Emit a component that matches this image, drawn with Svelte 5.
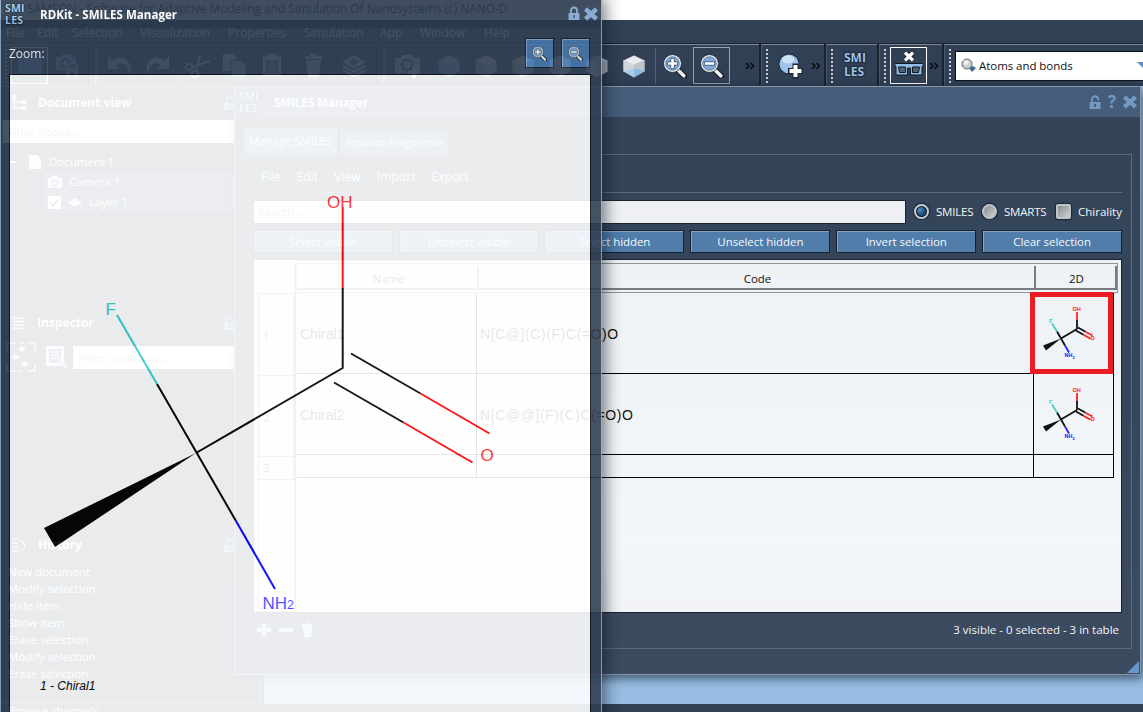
<script>
  const menus = [['File', 31], ['Edit', 35], ['Selection', 68], ['Visualization', 88], ['Properties', 76], ['Simulation', 76], ['App', 40], ['Window', 64], ['Help', 40]];
  const history = ['New document', 'Modify selection', 'Hide item', 'Show item', 'Erase selection', 'Modify selection', 'Erase selection'];
  const tools = [
    { w: 88, items: ['stop', 'shot'] },
    { w: 286, items: ['undo', 'redo', '|', 'cut', 'copy', 'paste', '|', 'trash', '|', 'layers'] },
    { w: 381, items: ['camera', '|', 'cube0', 'cube1', 'cube2', 'cube3', 'cube4', 'cube5', '|', 'zoomin', 'zoomout'], more: true },
    { w: 63, items: ['sphere'], more: true },
    { w: 51, items: ['smiles'] },
    { w: 63, items: ['glasses'], more: true }
  ];
  const cubes = {
    cube0: ['#b3cfe9', '#7ba6d0', '#92b9df'],
    cube1: ['#e6e8ea', '#9cbde0', '#c4c8cc'],
    cube2: ['#e6e8ea', '#c4c8cc', '#92b9df'],
    cube3: ['#c9ddef', '#b8bcc1', '#d5d7da'],
    cube4: ['#9dc1e3', '#d8dadd', '#a8adb3'],
    cube5: ['#e9eaec', '#a8cdec', '#8eb9df']
  };
  const boxed = ['stop', 'zoomout', 'glasses'];
  const actions = ['Select visible', 'Unselect visible', 'Select hidden', 'Unselect hidden', 'Invert selection', 'Clear selection'];
  const rows = [['1', 'Chiral1', 'N[C@](C)(F)C(=O)O'], ['2', 'Chiral2', 'N[C@@](F)(C)C(=O)O'], ['3', '', '']];
</script>

{#snippet lens(plus, s)}
  <svg width={s} height={s} viewBox="0 0 24 24">
    <path d="M14 15l7.200 7.200" stroke="#141c26" stroke-width="6" stroke-linecap="round" />
    <path d="M15 16l5.800 5.800" stroke="#eef0f2" stroke-width="3.600" stroke-linecap="round" />
    <circle cx="9.500" cy="9.500" r="9" fill="#e3e8ee" stroke="#1a2430" stroke-width=".8" />
    <circle cx="9.500" cy="9.500" r="6.800" fill="#7fa9d4" stroke="#4d6986" stroke-width=".7" />
    <path d={plus ? 'M4.500 9.500h10M9.500 4.500v10' : 'M4.500 9.500h10'} stroke="#31455c" stroke-width="4" />
    <path d={plus ? 'M5 9.500h9M9.500 5v9' : 'M5 9.500h9'} stroke="#fff" stroke-width="2.600" />
  </svg>
{/snippet}

{#snippet cross(s)}
  <svg width={s} height={s} viewBox="0 0 14 14"><path d="M3 3l8 8M11 3l-8 8" stroke="#26354a" stroke-width="5.200" /><path d="M1.500 2l11 10M12.500 2l-11 10" stroke="#7ba3cf" stroke-width="4.400" /></svg>
{/snippet}

{#snippet lock(open)}
  <svg width="12" height="15" viewBox="0 0 12 15"><path d={open ? 'M3 8V4.200a3 3 0 016 0v1' : 'M3 8V4.500a3 3 0 016 0V8'} fill="none" stroke="#7ba3cf" stroke-width="1.900" /><path d="M.5 7h11v7H.5z" fill="#7ba3cf" /><path d="M5.300 9h1.400v3H5.300z" fill="#34475f" /></svg>
{/snippet}

{#snippet brand()}
  <span class="brand"><b>SMI</b><b>LES</b></span>
{/snippet}

{#snippet toolIcon(n)}
  {#if n === 'smiles'}
    <span class="brand big"><b>SMI</b><b>LES</b></span>
  {:else if n === 'zoomin' || n === 'zoomout'}
    {@render lens(n === 'zoomin', 24)}
  {:else}
    <svg width="28" height="28" viewBox="0 0 28 28">
      {#if n === 'stop'}
        <path d="M2 5h24v17H2z" fill="#6f9bcb" />
      {:else if n === 'shot'}
        <path d="M3 5h5l2-3h7l2 3h4v13H3z" fill="#8ba9c8" /><circle cx="12" cy="11" r="5" fill="#33435a" /><circle cx="12" cy="11" r="3" fill="#8ba9c8" /><path d="M13 12h12v13H13z" fill="#9aa5b3" /><path d="M16 12h6v5h-6zM16 20h6v5h-6z" fill="#56657a" />
      {:else if n === 'undo'}
        <path d="M2 4v13h12l-4-4c6-4 12-1 14 10C28 9 16 1 7 9z" fill="#9bb8d6" />
      {:else if n === 'redo'}
        <path d="M26 4v13H14l4-4C12 9 6 12 5 23 0 9 12 1 21 9z" fill="#c4cad1" />
      {:else if n === 'cut'}
        <g fill="none" stroke="#b5c3d2" stroke-width="2"><circle cx="5" cy="15" r="3.300" /><circle cx="11" cy="22" r="3.300" /><path d="M8 15l18-6M12 19l4-16" /></g>
      {:else if n === 'copy'}
        <path d="M2 2h10l4 4v13H2z" fill="#c4cad1" /><path d="M10 8h10l5 5v12H10z" fill="#9bb8d6" stroke="#33435a" />
      {:else if n === 'paste'}
        <path d="M5 4h18v20H5z" fill="#b5c3d2" /><path d="M10 2h8v5h-8z" fill="#cdd4db" /><path d="M8 8h12v13H8z" fill="#53647a" /><path d="M10 11h8M10 14h8M10 17h8" stroke="#cdd4db" />
      {:else if n === 'trash'}
        <path d="M7 8h15l-2 17H9zM6 4h17v3H6zM11 2h7v2h-7z" fill="#aec0d4" />
      {:else if n === 'layers'}
        <path d="M3 18l11 6 11-6M3 14l11 6 11-6" fill="none" stroke="#c2cbd4" stroke-width="2" /><path d="M14 3l12 7-12 7-12-7z" fill="#c2cbd4" /><path d="M9 10h10M14 6v8" stroke="#3d4c60" stroke-width="2.500" />
      {:else if n === 'camera'}
        <path d="M1 6h6l2-3h9l2 3h6v15H1z" fill="#c2cbd4" /><circle cx="13" cy="13" r="6.500" fill="#33435a" /><circle cx="13" cy="13" r="4" fill="#c2cbd4" /><path d="M14 20h12M20 14v12" stroke="#fff" stroke-width="3.500" />
      {:else if n === 'sphere'}
        <circle cx="12" cy="12" r="10.500" fill="#1b2532" /><circle cx="12" cy="12" r="9.600" fill="#9dc3ea" /><ellipse cx="11" cy="7.500" rx="6" ry="4" fill="#cfe2f5" /><path d="M11 19h15M18.500 11.500v15" stroke="#1b2532" stroke-width="6" /><path d="M12.500 19h12M18.500 13v12" stroke="#fff" stroke-width="4" />
      {:else if n === 'glasses'}
        <path d="M10 .5l8 8M18 .5l-8 8" stroke="#111a25" stroke-width="5" /><path d="M10 .5l8 8M18 .5l-8 8" stroke="#fff" stroke-width="3.400" /><path d="M0 11.500h28v3h-1v8.500H15.500V16h-3v7H1v-8.500H0z" fill="#91bce8" stroke="#111a25" /><path d="M3.500 15h7v5.500h-6zM17.500 15h7l-1 5.500h-6z" fill="#53616f" stroke="#111a25" />
      {:else}
        <path d="M14 3l10.500 5v11.500L14 25.500 3.500 19.500V8z" fill={cubes[n][0]} stroke="#222d3b" stroke-width=".7" /><path d="M3.500 8L14 13v12.500l-10.500-6z" fill={cubes[n][1]} /><path d="M24.500 8L14 13v12.500l10.500-6z" fill={cubes[n][2]} />
        {#if n === 'cube5'}<path d="M3.500 8L14 13v3L3.500 19.500z" fill="#d2d5d8" /><path d="M24.500 8L14 13v3l10.500 3.500z" fill="#bfc3c7" />{/if}
      {/if}
    </svg>
  {/if}
{/snippet}

{#snippet thumb()}
  <svg class="thumb" width="72" height="70" viewBox="1.500 0 72 70" fill="none" stroke-width="1.800">
    <path d="M40.500 31V22" stroke="#111" /><path d="M40.500 22V14" stroke="#f22" />
    <path d="M40.500 31L24.500 40.500M24.500 40.500l-4-7M24.500 40.500l4 7" stroke="#111" />
    <path d="M20.500 33.500l-5-8" stroke="#4cc" /><path d="M28.500 47.500l4 7" stroke="#22f" />
    <path d="M41.500 29.500l7.500 4.300M39.500 32.500l7.500 4.300" stroke="#111" /><path d="M49 33.800l7 3.700M47 36.800l7 4" stroke="#f22" />
    <path d="M24.500 40.500L6.500 47.500l3 5z" fill="#111" stroke="none" />
    <g font-size="5.500" font-weight="bold" stroke="none"><text x="36" y="12.500" fill="#f11">OH</text><text x="12.500" y="25" fill="#3cc">F</text><text x="54" y="41.500" fill="#f11">O</text><text x="28" y="59" fill="#11f">NH<tspan dy="1.500" font-size="4">2</tspan></text></g>
  </svg>
{/snippet}

<div class="screen">
  <div class="app">
    <div class="caption">SAMSON - Software for Adaptive Modeling and Simulation Of Nanosystems (c) NANO-D</div>
    <div class="menubar">{#each menus as [m, w]}<span style="width:{w}px">{m}</span>{/each}</div>
    <div class="toolbar">
      {#each tools as g}
        <div class="group" style="width:{g.w}px">
          <i class="grip"></i>
          {#each g.items as it}
            {#if it === '|'}<i class="sep"></i>{:else}<div class="tool" class:boxed={boxed.includes(it)} class:white={it !== 'zoomout'} class:narrow={it === 'smiles'}>{@render toolIcon(it)}</div>{/if}
          {/each}
          {#if g.more}<svg class="more" width="10" height="8" viewBox="0 0 10 8"><path d="M1 1l3 3-3 3M5.500 1l3 3-3 3" fill="none" stroke="#080c12" stroke-width="1.500" /></svg>{/if}
        </div>
      {/each}
      <div class="group last">
        <i class="grip"></i>
        <div class="combo">
          <svg width="16" height="16" viewBox="0 0 16 16"><path d="M8 10l3 4 4-4-3-2z" fill="#42678c" /><circle cx="6" cy="6" r="5" fill="#c9cbcd" stroke="#666" /><circle cx="5" cy="4.500" r="2.500" fill="#eee" /></svg>
          <span>Atoms and bonds</span><i></i>
        </div>
      </div>
    </div>
    <div class="workspace">
      <div class="dock">
        <section class="docview">
          <header><svg width="14" height="16" viewBox="0 0 14 16"><path d="M2 1v12h9M2 7h9" fill="none" stroke="#d4dfeb" stroke-width="1.500" /><path d="M0 0h4v4H0zM9 5h5v4H9zM9 11h5v4H9z" fill="#d4dfeb" /></svg><b>Document view</b><em>{@render lock(true)}</em></header>
          <div class="filter">Filter nodes...</div>
          <div class="node root"><i></i><svg width="12" height="14" viewBox="0 0 12 14"><path d="M0 0h8l4 4v10H0z" fill="#d8e6f5" /></svg>Document 1</div>
          <div class="node child"><svg width="14" height="12" viewBox="0 0 14 12"><path d="M0 2h3l2-2h4l2 2h3v10H0z" fill="#dfe8f2" /><circle cx="7" cy="7" r="3.500" fill="#4c607a" /><circle cx="7" cy="7" r="2" fill="#dfe8f2" /></svg>Camera 1</div>
          <div class="node child"><svg width="13" height="13" viewBox="0 0 13 13"><path d="M0 0h13v13H0z" fill="#fff" /><path d="M2 6l3 4 6-7" stroke="#444" fill="none" stroke-width="1.500" /></svg><svg width="14" height="9" viewBox="0 0 14 9"><path d="M7 0l7 4.500-7 4.500-7-4.500z" fill="#dcebfa" /></svg>Layer 1</div>
        </section>
        <section class="inspector">
          <header><svg width="11" height="12" viewBox="0 0 11 12"><path d="M0 1h11M0 4.500h11M0 8h11M0 11.500h11" stroke="#d4dfeb" stroke-width="1.300" /></svg><b>Inspector</b><em>{@render lock(true)}</em></header>
          <div class="finder">
            <svg width="30" height="30" viewBox="0 0 30 30"><path d="M1 9V1h8M14 1h5M22 1h7v8M29 22v7h-8M17 29h-4M9 29H1v-8" stroke="#c2cbd6" fill="none" stroke-width="1.500" /><path d="M16 4l4 3-4 3-4-3zM9 12l4 3-4 3-4-3zM19 19l4 3-4 3-4-3z" fill="#dcebfa" /></svg>
            <svg width="24" height="26" viewBox="0 0 24 26"><path d="M1 2h18v20H1z" fill="#dcebfa" /><path d="M4 5h12v14H4z" fill="#50647f" /><path d="M6 8h8M6 11h8M6 14h5" stroke="#dcebfa" stroke-width="1.500" /><path d="M12 13l9 10" stroke="#b7c5d4" stroke-width="3" /></svg>
            <div class="filter">Filter attributes...</div>
          </div>
        </section>
        <section class="history">
          <header><svg width="14" height="14" viewBox="0 0 14 14"><path d="M0 1h7M0 5h6M0 9h6M0 13h7M8 3q8 3 3 9" stroke="#c2cbd6" fill="none" stroke-width="1.500" /></svg><b>History</b><em>{@render lock(true)}</em></header>
          {#each history as h}<div class="entry">{h}</div>{/each}
        </section>
      </div>
      <div class="viewport"></div>
    </div>
    <div class="footer">Browse channels</div>
  </div>

  <div class="manager">
    <div class="titlebar">{@render brand()}<b>SMILES Manager</b><div class="winicons">{@render lock(true)}<strong>?</strong>{@render cross(14)}</div></div>
    <div class="tabs"><span class="on">Manage SMILES</span><span>Replace fragments</span></div>
    <div class="pane">
      <div class="filemenu"><span>File</span><span>Edit</span><span>View</span><span>Import</span><span>Export</span></div>
      <div class="searchrow">
        <div class="search">Search...</div>
        <i class="radio on"></i><span class="r1">SMILES</span><i class="radio"></i><span class="r2">SMARTS</span><i class="check"></i><span>Chirality</span>
      </div>
      <div class="actions">{#each actions as a}<button>{a}</button>{/each}</div>
      <div class="table">
        <div class="index"><div class="corner"></div>{#each rows as r, i}<div class="num" class:first={i === 0} class:short={i === 2}>{r[0]}</div>{/each}<div class="rest"></div></div>
        <div class="grid">
          <div class="head"><span>Name</span><span>Code</span><span>2D</span></div>
          {#each rows as r, i}
            <div class="row" class:short={i === 2}><span>{r[1]}</span><span class="code">{r[2]}</span><span class="pic">{#if i < 2}{@render thumb()}{/if}{#if i === 0}<i class="marker"></i>{/if}</span></div>
          {/each}
        </div>
      </div>
      <div class="status">
        <svg width="58" height="14" viewBox="0 0 58 14"><path d="M0 7h14M7 0v14M22 7h14" stroke="#b8d5f3" stroke-width="4" /><path d="M46 3h9l-1 11h-7zM45 1h11v2H45zM49 0h3v1h-3z" fill="#b8d5f3" /></svg>
        <span>3 visible - 0 selected - 3 in table</span>
      </div>
    </div>
    <i class="resize"></i>
  </div>

  <div class="viewer">
    <div class="vtitle">{@render brand()}<b>RDKit - SMILES Manager</b><div class="vicons">{@render lock(false)}{@render cross(14)}</div></div>
    <div class="zoombar"><span>Zoom:</span><button>{@render lens(true, 15)}</button><button>{@render lens(false, 15)}</button></div>
    <div class="canvas">
      <svg width="580" height="637" viewBox="10 75 580 637" fill="none" stroke-width="2">
        <path d="M342.700 288V368L196 453M351 353.500l69.500 40M334 382.500l69.500 40M157 384l79 137" stroke="#000" />
        <path d="M342.700 207v81M420.500 393.500l69 40M403.500 422.500l69 40" stroke="#f00" />
        <path d="M117 315l40 69" stroke="#33cccc" /><path d="M236 521l39 68" stroke="#00f" />
        <path d="M196 453L44 528l11 19z" fill="#000" />
        <g font-size="17" stroke="none">
          <text x="327" y="208" fill="#ff2a2a">OH</text><text x="105.500" y="315" fill="#3cc">F</text><text x="480.500" y="461" fill="#ff2a2a">O</text><text x="262.500" y="608.500" fill="#44f">NH<tspan font-size="12.500">2</tspan></text>
          <text x="40" y="690" font-size="12" fill="#000" font-style="italic">1 - Chiral1</text>
        </g>
      </svg>
    </div>
  </div>
</div>

<style>
  :global(body) { margin: 0; overflow: hidden; }
  * { box-sizing: border-box; }
  svg { display: block; flex: none; }
  svg text { font-family: "Liberation Sans", Arial, sans-serif; }
  .screen { position: relative; width: 1143px; height: 712px; overflow: hidden; font: 11.500px/16px "Open Sans", sans-serif; color: #f2f5f8; white-space: nowrap; }
  .app { height: 712px; display: flex; flex-direction: column; background: #314054; }
  .caption { height: 20px; padding-left: 27px; background: #fff; color: #333; font-size: 12px; letter-spacing: -.06px; line-height: 18px; flex: none; }
  .menubar { display: flex; height: 23px; padding-left: 6px; line-height: 25px; font-size: 12px; flex: none; }
  .toolbar { display: flex; gap: 2px; height: 43px; background: #19222f; padding-top: 1px; flex: none; }
  .group { display: flex; align-items: center; background: #314054; border-top: 1px solid #7e8b96; border-left: 1px solid #465668; flex: none; }
  .group.last { flex: 1; min-width: 0; }
  .grip { width: 2px; height: 34px; margin: 0 4px; flex: none; background: repeating-linear-gradient(#c6cdd5 0 2px, transparent 2px 4px); }
  .tool { width: 37px; height: 37px; display: grid; place-items: center; flex: none; }
  .tool.narrow { width: 40px; }
  .boxed { border: 1px solid #8fa4b0; }
  .boxed.white { border-color: #fff; }
  .sep { width: 1px; height: 36px; margin-left: 3px; background: #53627a; flex: none; }
  .more { margin: 0 auto; position: relative; left: -1px; }
  .group:nth-child(3) .more { margin: 0 3px 0 auto; }
  .combo { display: flex; align-items: center; width: 190px; height: 30px; background: #fff; border: 1px solid #0c121b; color: #111; padding-left: 5px; overflow: hidden; flex: none; }
  .combo span { margin-left: 2px; letter-spacing: -.05px; }
  .combo i { margin-left: 64px; border: 8px solid transparent; border-top-color: #5b8fc9; border-bottom: 0; flex: none; }
  .workspace { flex: 1; display: flex; min-height: 0; gap: 4px; }
  .dock { width: 260px; border: 1px solid #667487; border-left: 0; flex: none; }
  .viewport { flex: 1; background: linear-gradient(#a9c9e8, #97bde2); }
  .footer { height: 8px; line-height: 14px; padding-left: 8px; overflow: hidden; flex: none; }
  header { display: flex; align-items: center; height: 32px; padding: 0 23px 0 12px; gap: 12px; font-size: 12px; }
  header em { margin-left: auto; display: flex; }
  header svg { min-width: 13px; }
  .docview { height: 216px; }
  .filter { height: 23px; background: #fff; color: #8d9299; padding-left: 5px; line-height: 23px; flex: 1; }
  .docview .filter { margin: 1px 0 9px 3px; }
  .node { display: flex; align-items: center; height: 20px; gap: 7px; }
  .root { padding-left: 10px; gap: 8px; }
  .root i { width: 6px; height: 2px; background: #fff; margin-right: 5px; }
  .child { margin-left: 44px; padding-left: 4px; background: #43536e; }
  .inspector { height: 223px; border-top: 1px solid #56667a; }
  .inspector header { height: 38px; }
  .finder { display: flex; align-items: center; gap: 9px; padding-left: 6px; }
  .finder .filter { margin-left: -5px; }
  .history { border-top: 1px solid #56667a; }
  .history header { height: 36px; }
  .entry { height: 17px; padding-left: 8px; line-height: 17px; }
  .brand { display: grid; width: 20px; font-size: 10.500px; line-height: 12px; color: #9dc2ea; text-shadow: 0 0 2px #0a1420, 0 0 2px #0a1420; letter-spacing: .2px; }
  .brand.big { font-size: 12px; line-height: 13.500px; width: 26px; letter-spacing: 0; position: relative; top: -1px; }

  .manager { position: absolute; left: 234px; top: 86px; width: 907px; height: 589px; background: linear-gradient(#334459, #36465a 45%, #3c4b60); border: 1px solid #8996a5; box-shadow: 2px 3px 10px rgba(8, 22, 42, .65); padding: 0 8px; }
  .titlebar { display: flex; align-items: center; height: 30px; margin: 0 -8px; padding: 0 3px 0 4px; background: #465d7a; }
  .titlebar > b { margin-left: 15px; position: relative; top: 1px; }
  .winicons { margin-left: auto; display: flex; align-items: center; gap: 7px; opacity: .85; }
  .winicons strong { color: #7ba3cf; font-size: 17px; line-height: 16px; }
  .tabs { display: flex; align-items: end; height: 37px; gap: 3px; padding: 0 0 1px 1px; }
  .tabs span { background: #4f7cab; height: 23px; padding: 0 5px; line-height: 23px; width: 108px; opacity: .9; letter-spacing: -.1px; }
  .tabs .on { height: 25px; width: 93px; line-height: 26px; opacity: 1; }
  .pane { height: 495px; border: 1px solid #5d6b7b; padding: 0 9px 0 9px; }
  .filemenu { display: flex; gap: 16px; height: 38px; padding: 14px 0 0 8px; border-bottom: 1px solid #5f6d7c; font-size: 12px; letter-spacing: .1px; }
  .searchrow { display: flex; align-items: center; height: 24px; margin-top: 7px; }
  .search { width: 653px; height: 24px; background: #eef0f3; border: 1px solid #1a2431; color: #8d9299; line-height: 22px; padding-left: 4px; flex: none; }
  .radio, .check { width: 15px; height: 15px; margin: -2px 7px 0 8px; border: 2px solid #bfc4c9; border-radius: 50%; background: linear-gradient(135deg, #858c94, #ced1d4); box-shadow: 0 0 1px 1px #1c2532; flex: none; }
  .radio.on { background: radial-gradient(circle at 35% 35%, #5692b9, #1c4e76 50%); border-color: #c6cdd3; box-shadow: inset 0 0 0 1px #0b1520, 0 0 1px 1px #1c2532; }
  .check { border-radius: 2px; }
  .r1 { width: 38px; letter-spacing: -.2px; } .r2 { width: 44px; letter-spacing: -.2px; }
  .actions { display: grid; grid-template-columns: repeat(6, 1fr); gap: 6px; margin-top: 6px; }
  button { border: 1px solid #18222e; background: #517dab; color: #f4f7fa; box-shadow: inset 1px 1px #82a5c9; font: inherit; padding: 0; height: 23px; letter-spacing: -.05px; }
  .table { display: flex; height: 354px; margin-top: 6px; border: 1px solid #18222e; background: linear-gradient(#eef2f5, #f3f6fa 80%, #f1f3f8); color: #111; padding: 3px 3px 3px 4px; }
  .index { width: 38px; border-right: 1px solid #777; display: flex; flex-direction: column; }
  .corner { height: 30px; }
  .num { height: 81px; line-height: 83px; padding-left: 4px; border: 1px solid #888; border-top: 0; border-right-width: 2px; color: #444; }
  .num.first { height: 83px; border-top: 1px solid #888; }
  .num.short { height: 23px; line-height: 22px; }
  .rest { flex: 1; border-bottom: 1px solid #999; border-left: 1px solid #999; }
  .grid { flex: 1; font-family: "Liberation Sans", Arial, sans-serif; font-size: 14px; padding-left: 1px; }
  .head { display: grid; grid-template-columns: 181px 557px 1fr; height: 30px; border: 1px solid #90959b; padding: 2px 0 2px 0; font: 11.500px "Open Sans", sans-serif; }
  .head span { display: grid; place-items: center; border-right: 2px solid #777c82; border-bottom: 2px solid #777c82; padding: 2px 0 0 2px; }
  .row { display: grid; grid-template: 81px / 180px 557px 80px; line-height: 82px; }
  .row span { border-right: 1px solid #000; border-bottom: 1px solid #000; padding-left: 3px; }
  .row .code { letter-spacing: .57px; }
  .row .pic { position: relative; padding: 5px 4px 4px; }
  .row.short { grid-template-rows: 23px; line-height: 20px; }
  .marker { position: absolute; left: -4px; top: -1px; width: 83px; height: 82px; border: 5px solid #ed1c24; z-index: 1; }
  .status { display: flex; justify-content: space-between; align-items: center; height: 33px; padding: 0 3px 0 4px; }
  .resize { position: absolute; right: 1px; bottom: 1px; border: 6px solid transparent; border-right-color: #6696cb; border-bottom-color: #6696cb; }

  .viewer { position: absolute; left: 0; top: -2px; width: 602px; height: 730px; background: #324054; opacity: .9; border: 1px solid #8ba7c6; box-shadow: 2px 0 16px rgba(8, 18, 32, .7); display: flex; flex-direction: column; }
  .vtitle { display: flex; align-items: center; height: 29px; background: #2b394d; padding: 1px 3px 1px 4px; flex: none; }
  .vtitle > b { margin-left: 15px; color: #fff; letter-spacing: .05px; position: relative; top: 1px; }
  .vicons { margin-left: auto; display: flex; align-items: center; gap: 4px; }
  .zoombar { display: flex; align-items: center; height: 46px; padding: 4px 11px 0 8px; gap: 7px; flex: none; font-size: 12px; }
  .zoombar span { margin-right: auto; position: relative; top: 1px; }
  .zoombar button { width: 29px; height: 30px; display: grid; place-items: center; padding: 0; background: #4878ac; }
  .canvas { width: 582px; height: 660px; margin-left: 8px; background: #fff; border: 1px solid #0c131e; border-bottom: 0; flex: none; }
</style>
